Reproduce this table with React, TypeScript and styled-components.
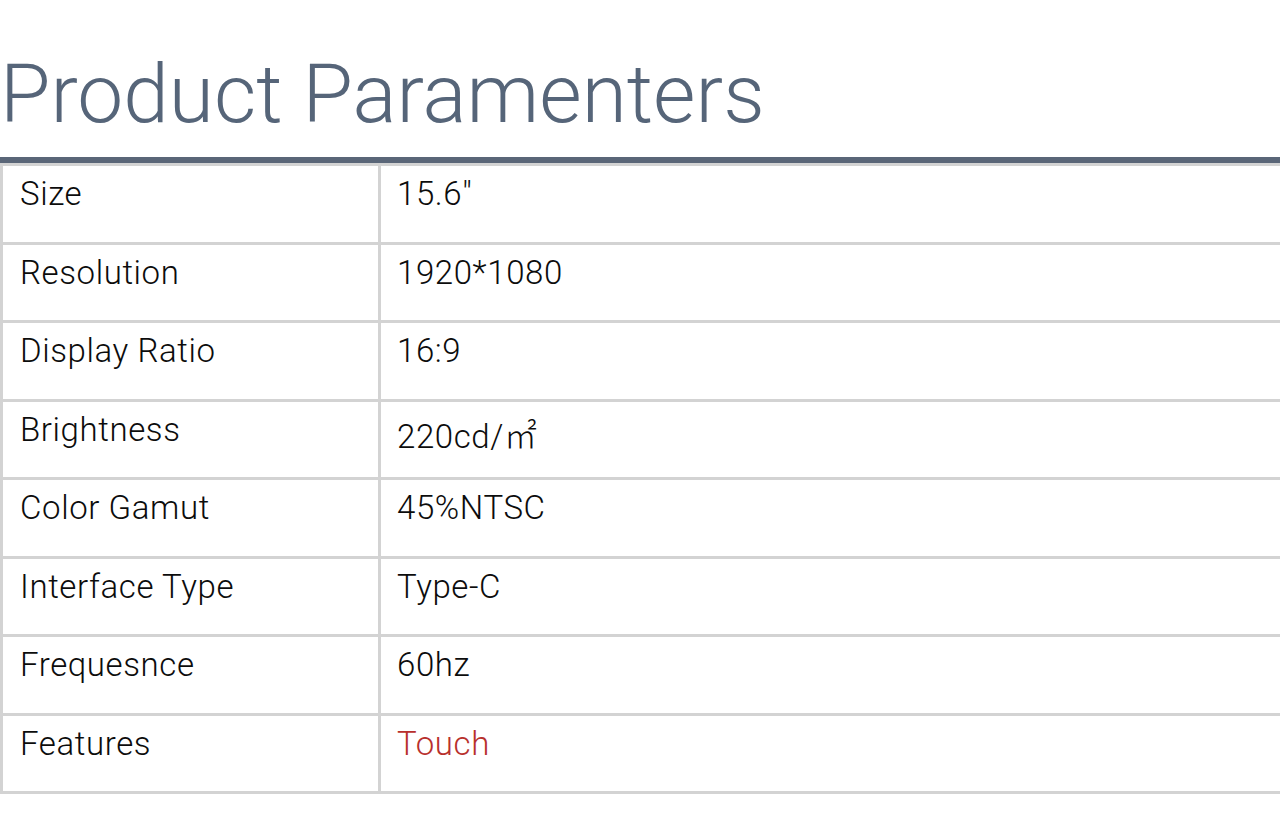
import React from "react";
import styled, { createGlobalStyle } from "styled-components";

const GlobalStyle = createGlobalStyle`
  html, body {
    margin: 0;
    padding: 0;
    background: #fff;
    overflow: hidden;
  }
  body {
    font-family: Roboto, "Noto Sans CJK SC", sans-serif;
  }
`;

interface IRow {
  label: string;
  value: string;
  accent?: boolean;
}

const rows: IRow[] = [
  { label: "Size", value: '15.6"' },
  { label: "Resolution", value: "1920*1080" },
  { label: "Display Ratio", value: "16:9" },
  { label: "Brightness", value: "220cd/㎡" },
  { label: "Color Gamut", value: "45%NTSC" },
  { label: "Interface Type", value: "Type-C" },
  { label: "Frequesnce", value: "60hz" },
  { label: "Features", value: "Touch", accent: true },
];

const App: React.FC = () => {
  return (
    <Page>
      <GlobalStyle />
      <Title>Product Paramenters</Title>
      <Table>
        <tbody>
          {rows.map((r) => (
            <tr key={r.label}>
              <Label>{r.label}</Label>
              <Value $accent={r.accent}>{r.value}</Value>
            </tr>
          ))}
        </tbody>
      </Table>
    </Page>
  );
};

export default App;

const Page = styled.div`
  width: 1284px;
  padding-top: 53px;
`;

const Title = styled.h1`
  margin: 0;
  font-family: Roboto, sans-serif;
  font-weight: 300;
  font-size: 82px;
  line-height: 83px;
  color: #566579;
  height: 104px;
  border-bottom: 6px solid #5a6678;
`;

const Table = styled.table`
  width: 100%;
  border-collapse: collapse;
  border: 3px solid #d3d3d3;
  border-top: 2px solid #d3d3d3;
  tr {
    height: 78.5px;
  }
`;

const Cell = styled.td`
  border: 3px solid #d3d3d3;
  vertical-align: top;
  padding: 8px 0 0 17px;
  font-size: 33px;
  font-weight: 300;
  letter-spacing: 0.6px;
  line-height: normal;
  box-sizing: border-box;
`;

const Label = styled(Cell)`
  width: 378px;
  color: #0c0c0c;
`;

const Value = styled(Cell)<{ $accent?: boolean }>`
  color: ${(p) => (p.$accent ? "#b8302c" : "#0c0c0c")};
  padding-left: 16px;
`;
